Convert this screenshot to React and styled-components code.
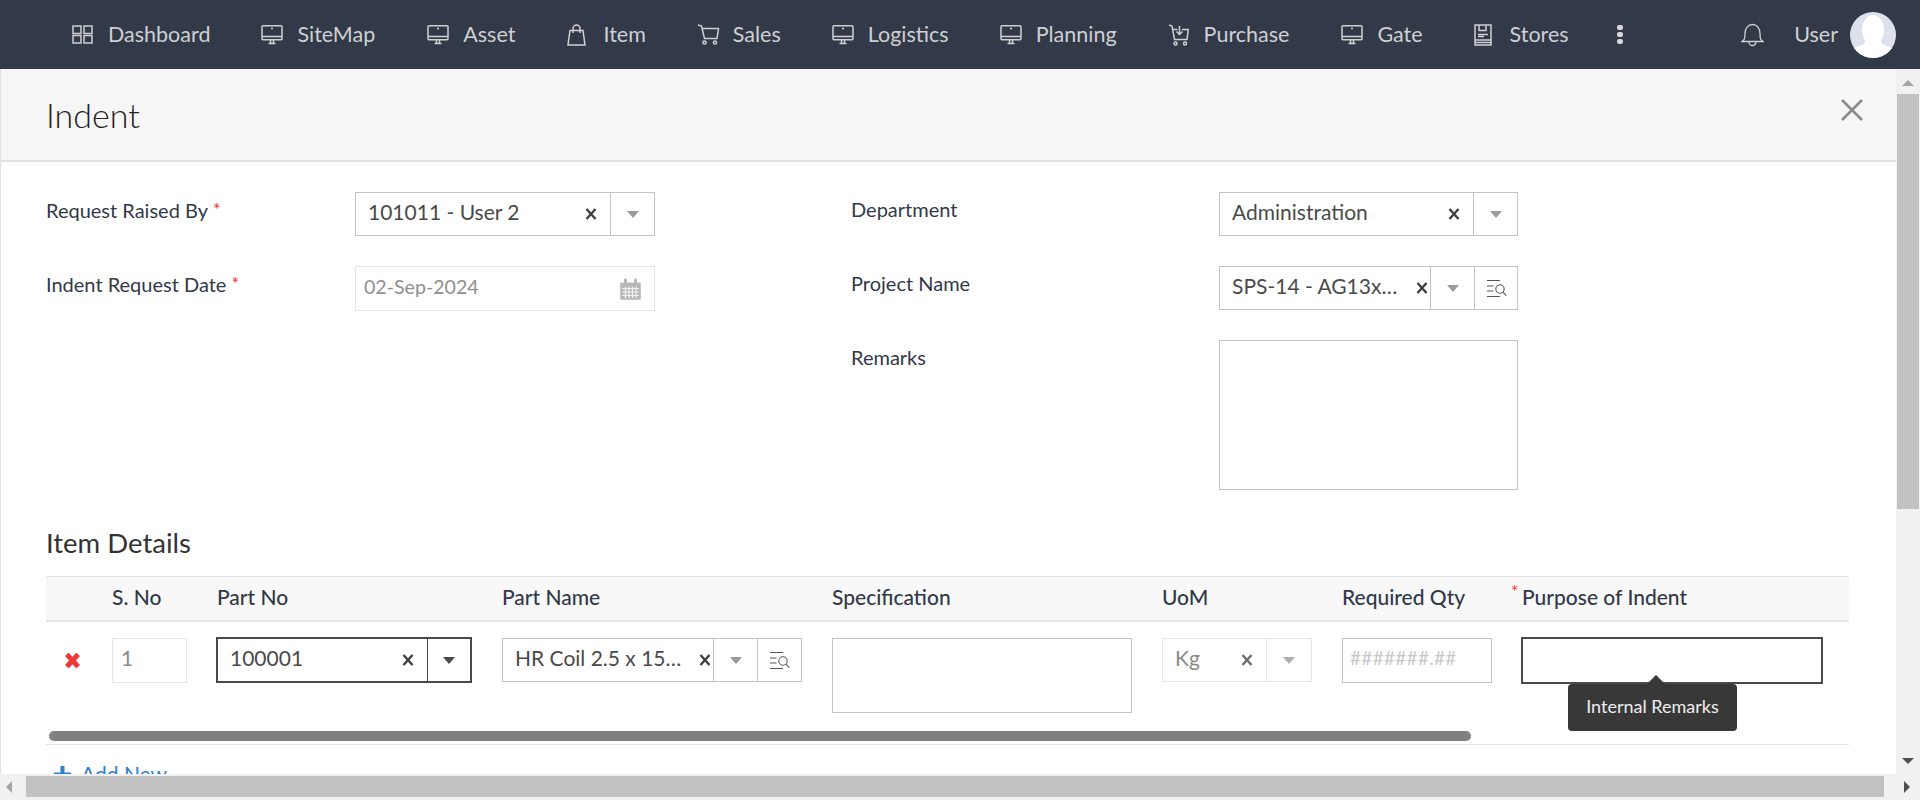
import React from "react";
import styled, { createGlobalStyle } from "styled-components";

const Global = createGlobalStyle`
  html, body { margin: 0; padding: 0; height: 100%; overflow: hidden; background: #fff; }
  body { font-family: Lato, "Open Sans", "Liberation Sans", sans-serif; }
  * { box-sizing: border-box; }
`;

const Page = styled.div`
  width: 1920px; height: 800px; display: flex; flex-direction: column; overflow: hidden;
`;

/* ---------- top navigation ---------- */
const Nav = styled.nav`
  height: 69px; flex: none; background: #323949; display: flex; align-items: center;
  padding-left: 71px; color: #cfd0d2; font-size: 21.5px;
`;
const NavItem = styled.a`
  display: flex; align-items: center; margin-right: ${p => p.$gap}px; white-space: nowrap; padding-bottom: 2px;
`;
const NavIconBox = styled.span`
  width: 37px; height: 24px; flex: none; display: flex; align-items: center; margin-top: 2px; padding-left: 1px;
  svg { display: block; fill: none; stroke: #cfd0d2; stroke-width: 1.5; }
`;
const NavRight = styled.div`
  margin-left: auto; display: flex; align-items: center; padding-right: 24px;
`;
const Dots = styled.span`
  width: 6px; display: flex; flex-direction: column; gap: 1.5px;
  i { display: block; height: 5.5px; border-radius: 2px; background: #d8d8d8; }
`;
const Bell = styled.span`
  width: 53px; display: flex;
  svg { fill: none; stroke: #cfd0d2; stroke-width: 1.3; }
`;
const UserName = styled.span` margin-right: 12px; padding-bottom: 2px; `;
const Avatar = styled.span`
  width: 46px; height: 46px; flex: none; display: block;
  svg { display: block; }
`;

const Monitor = () => (
  <svg width="22" height="20" viewBox="0 0 22 20">
    <rect x="1" y="0.800" width="20" height="14" rx="1" />
    <path d="M1 11.500h20M7.500 18.600h7M9.500 15v3.500M12.500 15v3.500" />
    <path d="M10 3.500h2" />
  </svg>
);
const Grid4 = () => (
  <svg width="21" height="19" viewBox="0 0 21 19">
    <rect x="1" y="1" width="8" height="7.500" /><rect x="12" y="1" width="8" height="7.500" />
    <rect x="1" y="10.500" width="8" height="7.500" /><rect x="12" y="10.500" width="8" height="7.500" />
  </svg>
);
const Bag = () => (
  <svg width="19" height="22" viewBox="0 0 19 22">
    <path d="M3 6.500h13l2 14.500H1z" /><path d="M6 9V4.500a3.500 3.500 0 0 1 7 0V9" />
  </svg>
);
const Cart = () => (
  <svg width="23" height="21" viewBox="0 0 23 21">
    <path d="M1 1l3.500 1 3 12.500h12.500l1.500-10H5" />
    <circle cx="7.500" cy="18.500" r="1.600" /><circle cx="18" cy="18.500" r="1.600" />
  </svg>
);
const PurchaseIcon = () => (
  <svg width="21" height="22" viewBox="0 0 21 22">
    <path d="M1 1l3 1 2.500 13.500h12.500l1.300-10H14M9.500 5.500H5" />
    <path d="M11.500 2v8.500M8.500 7.500l3 3 3-3" />
    <circle cx="7.500" cy="19.500" r="1.500" /><circle cx="17" cy="19.500" r="1.500" />
  </svg>
);
const StoresIcon = () => (
  <svg width="18" height="22" viewBox="0 0 18 22">
    <rect x="1" y="1" width="16" height="20" />
    <path d="M1 16h16M1 18.500h16M5 1v5.500h7V1M4 10.500h10M4 12.500h6" />
  </svg>
);
const BellIcon = () => (
  <svg width="23" height="25" viewBox="0 0 23 25">
    <path d="M1 19.500c2.500-1.500 3-3 3-8 0-5 3-9 7.500-9s7.500 4 7.500 9c0 5 .5 6.500 3 8z" />
    <path d="M8 20a3.500 3.500 0 0 0 7 0" />
  </svg>
);
const AvatarImg = () => (
  <svg width="46" height="46" viewBox="0 0 46 46">
    <defs><clipPath id="av"><circle cx="23" cy="23" r="23" /></clipPath></defs>
    <g clipPath="url(#av)">
      <rect width="46" height="46" fill="#dde1ec" />
      <ellipse cx="23" cy="18" rx="11" ry="15" fill="#fff" />
      <path d="M16 27h14l2 5 10 4v10H4V36l10-4z" fill="#fff" />
    </g>
  </svg>
);

const navItems = [
  ["Dashboard", Grid4, 50], ["SiteMap", Monitor, 51], ["Asset", Monitor, 51], ["Item", Bag, 50],
  ["Sales", Cart, 50], ["Logistics", Monitor, 50], ["Planning", Monitor, 50],
  ["Purchase", PurchaseIcon, 51], ["Gate", Monitor, 50], ["Stores", StoresIcon, 48],
];

/* ---------- body & scrollbars ---------- */
const Body = styled.div` flex: 1; min-height: 0; display: flex; `;
const Content = styled.main`
  flex: 1; min-width: 0; overflow: hidden; border-left: 1px solid #e2e2e2; color: #323949;
`;
const VBar = styled.div`
  width: 24px; flex: none; background: #f1f1f1; display: flex; flex-direction: column;
  align-items: flex-end; position: relative;
`;
const VThumb = styled.div`
  width: 22px; height: 415px; margin: 25px 1px 0 0; background: #c1c1c1;
`;
const HBar = styled.div`
  height: 26px; flex: none; background: #f1f1f1; display: flex; align-items: flex-start; position: relative;
`;
const HThumb = styled.div`
  width: 1858px; height: 21px; margin: 2px 0 0 26px; background: #c1c1c1;
`;
const Arrow = styled.span`
  position: absolute; width: 0; height: 0; border-style: solid; border-color: transparent;
  ${p => p.$dir === "up" && `top: 11px; left: 6px; border-width: 0 6px 6px; border-bottom-color: #a3a3a3;`}
  ${p => p.$dir === "down" && `bottom: 10px; left: 6px; border-width: 6px 6px 0; border-top-color: #505050;`}
  ${p => p.$dir === "left" && `top: 7px; left: 6px; border-width: 6px 6px 6px 0; border-right-color: #a3a3a3;`}
  ${p => p.$dir === "right" && `top: 7px; right: 10px; border-width: 6px 0 6px 6px; border-left-color: #505050;`}
`;

/* ---------- header ---------- */
const Header = styled.header`
  height: 93px; background: #f6f6f6; border-bottom: 2px solid #e2e2e2; display: flex; align-items: center;
  justify-content: space-between; padding: 0 33px 0 45px;
`;
const Title = styled.h1`
  margin: 0; font-size: 34px; font-weight: 300; color: #222; line-height: 1;
`;
const CloseBtn = styled.span`
  display: flex; margin-top: -9px;
  svg { stroke: #8b8b8b; stroke-width: 2.6; fill: none; }
`;

/* ---------- form ---------- */
const Form = styled.section`
  padding: 30px 0 0 45px; display: flex; height: 327px;
`;
const FormCol = styled.div`
  width: ${p => p.$w}px; display: flex; flex-direction: column; gap: 30px;
`;
const Field = styled.div`
  display: grid; grid-template-columns: ${p => p.$label}px 300px; align-items: start; min-height: 44px;
`;
const Label = styled.label`
  font-size: 20px; line-height: 34px; color: #323949;
`;
const Star = styled.span`
  color: #f03030; font-size: 18px; margin-left: 5px; vertical-align: 2px;
`;
const SelectBox = styled.div`
  display: flex; align-items: stretch; height: ${p => p.$h || 44}px; width: ${p => p.$w || 300}px;
  border: ${p => p.$active ? "2px solid #4a4a4a" : `1px solid ${p.$muted ? "#e6e6e6" : "#c4c4c4"}`};
  background: #fff; color: ${p => p.$muted ? "#8a8a8a" : "#4a4a4a"}; font-size: 21px;
`;
const SelectValue = styled.span`
  flex: 1; min-width: 0; padding-left: 12px; line-height: 38px;
  white-space: nowrap; overflow: hidden; text-overflow: ellipsis;
`;
const Clear = styled.span`
  width: ${p => p.$w || 38}px; flex: none; display: flex; align-items: center;
  justify-content: ${p => p.$w ? "flex-end" : "center"}; padding-right: ${p => p.$w ? 2 : 0}px;
  svg { stroke: ${p => p.$muted ? "#6b6b6b" : "#3f3f3f"}; stroke-width: 2.4; fill: none; }
`;
const Addon = styled.span`
  width: ${p => p.$w}px; flex: none; display: flex; align-items: center; justify-content: center;
  border-left: ${p => p.$active ? "1px solid #4a4a4a" : `1px solid ${p.$muted ? "#e6e6e6" : "#c4c4c4"}`};
`;
const Caret = styled.span`
  width: 0; height: 0; border-style: solid; border-width: 7px 6px 0; border-color: ${p => p.$dark ? "#4a4a4a" : "#9a9a9a"} transparent transparent;
  ${p => p.$muted && "border-top-color: #b0b0b0;"}
`;
const DateBox = styled.div`
  width: 300px; height: 45px; border: 1px solid #e6e6e6; display: flex; align-items: center;
  justify-content: space-between; padding: 0 13px 0 8px; font-size: 19.6px; color: #8f8f8f;
`;
const DateText = styled.span` padding-bottom: 5px; `;
const TextArea = styled.div`
  width: ${p => p.$w || 300}px; height: ${p => p.$h || 150}px; border: 1px solid #c4c4c4; background: #fff;
`;

/* ---------- table ---------- */
const SectionTitle = styled.h2`
  margin: 0; padding: 37px 0 16px 45px; font-size: 27.500px; line-height: 34px; font-weight: 400; color: #333;
`;
const Table = styled.div`
  margin: 0 47px 0 45px;
`;
const cols = "66px 104px 286px 330px 330px 180px 169px 337px";
const HeadRow = styled.div`
  display: grid; grid-template-columns: ${cols}; height: 46px; background: #f8f8f8;
  border-top: 1px solid #e3e3e3; border-bottom: 2px solid #e6e6e6; align-items: center;
  font-size: 21px; font-weight: 500; color: #323949;
`;
const HeadCell = styled.span`
  position: relative; padding-left: ${p => p.$pad || 0}px; line-height: 22px; margin-top: -3px; white-space: nowrap;
`;
const HeadStar = styled.span`
  position: absolute; left: 0; top: -5px; color: #f03030; font-size: 17px; font-weight: 400;
`;
const BodyRow = styled.div`
  display: grid; grid-template-columns: ${cols}; height: 109px; padding-top: 16px; align-items: start;
`;
const DelCell = styled.span`
  padding: 15px 0 0 19px; display: flex;
  svg { stroke: #f03a3a; stroke-width: 4; fill: none; }
`;
const Cell = styled.div`
  position: relative; margin-left: ${p => p.$ml || 0}px; margin-top: ${p => p.$mt || 0}px;
`;
const PlainInput = styled.div`
  width: ${p => p.$w}px; height: ${p => p.$h || 45}px; background: #fff;
  border: ${p => p.$active ? "2px solid #4a4a4a" : `1px solid ${p.$muted ? "#e6e6e6" : "#c4c4c4"}`};
  color: ${p => p.$ph ? "#c8c8c8" : "#8a8a8a"}; font-size: ${p => p.$ph ? 19 : 21}px; line-height: 38px; padding-left: 8px;
  ${p => p.$ph && "letter-spacing: 0.3px; padding-left: 7px;"}
`;
const InnerScroll = styled.div`
  height: 14px; border-bottom: 1px solid #e3e3e3;
  &::before { content: ""; display: block; width: 1422px; height: 10px; margin-left: 3px; background: #808080; border-radius: 5px; }
`;
const AddNew = styled.a`
  display: flex; align-items: center; gap: 10px; padding: 17px 0 0 8px; color: #2f7fd0; font-size: 21px; line-height: 24px;
  svg { fill: #2f7fd0; }
`;
const Tooltip = styled.div`
  position: absolute; left: 47px; top: 47px; width: 169px; height: 47px; background: #383838; border-radius: 4px;
  color: #eee; font-size: 18px; display: flex; align-items: center; justify-content: center; z-index: 2; padding-bottom: 4px;
  &::before { content: ""; position: absolute; left: 79px; top: -9px; width: 0; height: 0;
    border-style: solid; border-width: 0 9px 9px; border-color: transparent transparent #383838; }
`;

const X = ({ s = 12 }) => (
  <svg width={s} height={s} viewBox="0 0 12 12"><path d="M1.500 1l9 10M10.500 1l-9 10" /></svg>
);
const Lookup = () => (
  <svg width="21" height="19" viewBox="0 0 21 19" fill="none" stroke="#555" strokeWidth="1.1">
    <path d="M1 1.500h13M1 7h6.500M1 12h6.500M1 17.500h13" />
    <circle cx="14" cy="10" r="4.200" /><path d="M17 13.200l3.200 3.500" />
  </svg>
);
const Calendar = () => (
  <svg width="21" height="22" viewBox="0 0 21 22">
    <path d="M1 4.500h19a.8.8 0 0 1 .8.8V21a.8.8 0 0 1-.8.8H1a.8.8 0 0 1-.8-.8V5.300a.8.8 0 0 1 .8-.8z" fill="#b8b8b8" />
    <rect x="4" y="0.500" width="3" height="6" rx="1.400" fill="#b8b8b8" /><rect x="14" y="0.500" width="3" height="6" rx="1.400" fill="#b8b8b8" />
    <path d="M2 10.500h17M2 14h17M2 17.500h17M5.500 8.500v11.500M9 8.500v11.500M12.500 8.500v11.500M16 8.500v11.500" stroke="#f2f2f2" strokeWidth="1.200" />
  </svg>
);

const Select = ({ value, lookup, active, muted, w, h, clearW, caretW = 44, lookupW = 0 }) => (
  <SelectBox $active={active} $muted={muted} $w={w} $h={h}>
    <SelectValue>{value}</SelectValue>
    <Clear $w={clearW} $muted={muted}><X /></Clear>
    <Addon $w={caretW} $active={active} $muted={muted}><Caret $dark={active} $muted={muted} /></Addon>
    {lookup && <Addon $w={lookupW}><Lookup /></Addon>}
  </SelectBox>
);

export default function App() {
  return (
    <Page>
      <Global />
      <Nav>
        {navItems.map(([label, Icon, gap]) => (
          <NavItem key={label} $gap={gap}>
            <NavIconBox><Icon /></NavIconBox>{label}
          </NavItem>
        ))}
        <Dots><i /><i /><i /></Dots>
        <NavRight>
          <Bell><BellIcon /></Bell>
          <UserName>User</UserName>
          <Avatar><AvatarImg /></Avatar>
        </NavRight>
      </Nav>
      <Body>
        <Content>
          <Header>
            <Title>Indent</Title>
            <CloseBtn><svg width="22" height="22" viewBox="0 0 22 22"><path d="M1 1l20 20M21 1L1 21" /></svg></CloseBtn>
          </Header>
          <Form>
            <FormCol $w={805}>
              <Field $label={309}>
                <Label>Request Raised By<Star>*</Star></Label>
                <Select value="101011 - User 2" />
              </Field>
              <Field $label={309}>
                <Label>Indent Request Date<Star>*</Star></Label>
                <DateBox><DateText>02-Sep-2024</DateText><Calendar /></DateBox>
              </Field>
            </FormCol>
            <FormCol $w={667}>
              <Field $label={368}>
                <Label>Department</Label>
                <Select value="Administration" w={299} />
              </Field>
              <Field $label={368}>
                <Label>Project Name</Label>
                <Select value="SPS-14 - AG13x…" lookup w={299} clearW={22} caretW={44} lookupW={43} />
              </Field>
              <Field $label={368}>
                <Label>Remarks</Label>
                <TextArea $w={299} />
              </Field>
            </FormCol>
          </Form>
          <SectionTitle>Item Details</SectionTitle>
          <Table>
            <HeadRow>
              <HeadCell />
              <HeadCell>S. No</HeadCell>
              <HeadCell $pad={1}>Part No</HeadCell>
              <HeadCell>Part Name</HeadCell>
              <HeadCell>Specification</HeadCell>
              <HeadCell>UoM</HeadCell>
              <HeadCell>Required Qty</HeadCell>
              <HeadCell $pad={11}><HeadStar>*</HeadStar>Purpose of Indent</HeadCell>
            </HeadRow>
            <BodyRow>
              <DelCell><X s={15} /></DelCell>
              <Cell><PlainInput $w={75} $muted>1</PlainInput></Cell>
              <Cell $mt={-1}><Select value="100001" active w={256} h={46} caretW={43} /></Cell>
              <Cell><Select value="HR Coil 2.5 x 15…" lookup w={300} clearW={22} caretW={44} lookupW={44} /></Cell>
              <Cell><TextArea $h={75} /></Cell>
              <Cell><Select value="Kg" muted w={150} caretW={45} /></Cell>
              <Cell><PlainInput $w={150} $ph>#######.##</PlainInput></Cell>
              <Cell $ml={10} $mt={-1}>
                <PlainInput $w={302} $h={47} $active />
                <Tooltip>Internal Remarks</Tooltip>
              </Cell>
            </BodyRow>
            <InnerScroll />
            <AddNew>
              <svg width="17" height="17" viewBox="0 0 17 17"><path d="M6.500 0h4v6.500H17v4h-6.500V17h-4v-6.500H0v-4h6.500z" /></svg>
              Add New
            </AddNew>
          </Table>
        </Content>
        <VBar>
          <Arrow $dir="up" />
          <VThumb />
          <Arrow $dir="down" />
        </VBar>
      </Body>
      <HBar>
        <Arrow $dir="left" />
        <HThumb />
        <Arrow $dir="right" />
      </HBar>
    </Page>
  );
}
